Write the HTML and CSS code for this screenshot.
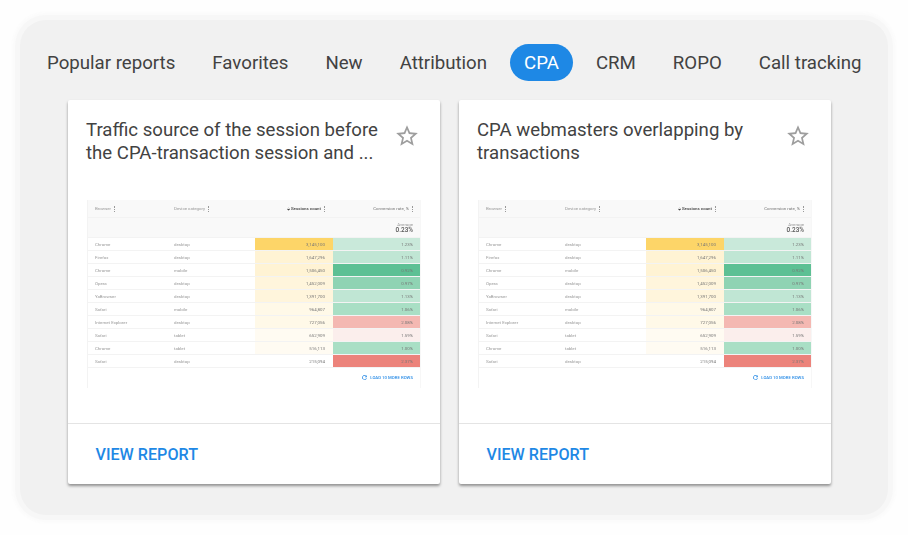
FILE: index.html
```html
<!DOCTYPE html>
<html lang="en">
<head>
<meta charset="utf-8">
<title>Reports</title>
<link rel="stylesheet" href="styles.css">
</head>
<body>
<main class="panel">
  <nav class="tabs">
    <a class="tab">Popular reports</a>
    <a class="tab">Favorites</a>
    <a class="tab">New</a>
    <a class="tab">Attribution</a>
    <a class="tab tab-active">CPA</a>
    <a class="tab">CRM</a>
    <a class="tab">ROPO</a>
    <a class="tab">Call tracking</a>
  </nav>
  <section class="cards">
    <article class="card">
      <header class="card-head">
        <h2 class="card-title">Traffic source of the session before the CPA-transaction session and ...</h2>
        <svg class="star" viewBox="0 0 24 24"><path d="M22 9.24l-7.19-.62L12 2 9.19 8.63 2 9.24l5.46 4.73L5.82 21 12 17.27 18.18 21l-1.63-7.03L22 9.24zM12 15.4l-3.76 2.27 1-4.28-3.32-2.88 4.38-.38L12 6.1l1.71 4.04 4.38.38-3.32 2.88 1 4.28L12 15.4z"/></svg>
      </header>
      <div class="preview">
        <div class="tbl">
          <div class="row row-head"><span class="c1">Browser<i class="dots"></i></span><span class="c2">Device category<i class="dots"></i></span><span class="c3 strong">⬙ Sessions count<i class="dots"></i></span><span class="c4">Conversion rate, %<i class="dots"></i></span></div>
          <div class="row row-avg"><span class="avg"><small>Average</small><b>0.23%</b></span></div>
          <div class="row"><span class="c1">Chrome</span><span class="c2">desktop</span><span class="c3 y1">3,145,100</span><span class="c4 g1">1.23%</span></div>
          <div class="row"><span class="c1">Firefox</span><span class="c2">desktop</span><span class="c3 y2">1,647,296</span><span class="c4 g2">1.11%</span></div>
          <div class="row"><span class="c1">Chrome</span><span class="c2">mobile</span><span class="c3 y2">1,506,450</span><span class="c4 g3">0.92%</span></div>
          <div class="row"><span class="c1">Opera</span><span class="c2">desktop</span><span class="c3 y3">1,452,009</span><span class="c4 g4">0.97%</span></div>
          <div class="row"><span class="c1">YaBrowser</span><span class="c2">desktop</span><span class="c3 y3">1,391,700</span><span class="c4 g2">1.13%</span></div>
          <div class="row"><span class="c1">Safari</span><span class="c2">mobile</span><span class="c3 y4">964,807</span><span class="c4 g5">1.06%</span></div>
          <div class="row"><span class="c1">Internet Explorer</span><span class="c2">desktop</span><span class="c3 y4">727,056</span><span class="c4 r1">2.08%</span></div>
          <div class="row"><span class="c1">Safari</span><span class="c2">tablet</span><span class="c3 y5">652,909</span><span class="c4 r2">1.59%</span></div>
          <div class="row"><span class="c1">Chrome</span><span class="c2">tablet</span><span class="c3 y5">516,113</span><span class="c4 g5">1.00%</span></div>
          <div class="row"><span class="c1">Safari</span><span class="c2">desktop</span><span class="c3">215,094</span><span class="c4 r3">2.37%</span></div>
          <div class="more"><svg class="reload" viewBox="0 0 24 24"><path d="M17.65 6.35A8 8 0 1 0 19.73 14h-2.08A6 6 0 1 1 12 6c1.66 0 3.14.69 4.22 1.78L13 11h7V4l-2.35 2.35z"/></svg>LOAD 10 MORE ROWS</div>
        </div>
      </div>
      <footer class="card-foot"><a class="view">VIEW REPORT</a></footer>
    </article>
    <article class="card">
      <header class="card-head">
        <h2 class="card-title">CPA webmasters overlapping by transactions</h2>
        <svg class="star" viewBox="0 0 24 24"><path d="M22 9.24l-7.19-.62L12 2 9.19 8.63 2 9.24l5.46 4.73L5.82 21 12 17.27 18.18 21l-1.63-7.03L22 9.24zM12 15.4l-3.76 2.27 1-4.28-3.32-2.88 4.38-.38L12 6.1l1.71 4.04 4.38.38-3.32 2.88 1 4.28L12 15.4z"/></svg>
      </header>
      <div class="preview">
        <div class="tbl">
          <div class="row row-head"><span class="c1">Browser<i class="dots"></i></span><span class="c2">Device category<i class="dots"></i></span><span class="c3 strong">⬙ Sessions count<i class="dots"></i></span><span class="c4">Conversion rate, %<i class="dots"></i></span></div>
          <div class="row row-avg"><span class="avg"><small>Average</small><b>0.23%</b></span></div>
          <div class="row"><span class="c1">Chrome</span><span class="c2">desktop</span><span class="c3 y1">3,145,100</span><span class="c4 g1">1.23%</span></div>
          <div class="row"><span class="c1">Firefox</span><span class="c2">desktop</span><span class="c3 y2">1,647,296</span><span class="c4 g2">1.11%</span></div>
          <div class="row"><span class="c1">Chrome</span><span class="c2">mobile</span><span class="c3 y2">1,506,450</span><span class="c4 g3">0.92%</span></div>
          <div class="row"><span class="c1">Opera</span><span class="c2">desktop</span><span class="c3 y3">1,452,009</span><span class="c4 g4">0.97%</span></div>
          <div class="row"><span class="c1">YaBrowser</span><span class="c2">desktop</span><span class="c3 y3">1,391,700</span><span class="c4 g2">1.13%</span></div>
          <div class="row"><span class="c1">Safari</span><span class="c2">mobile</span><span class="c3 y4">964,807</span><span class="c4 g5">1.06%</span></div>
          <div class="row"><span class="c1">Internet Explorer</span><span class="c2">desktop</span><span class="c3 y4">727,056</span><span class="c4 r1">2.08%</span></div>
          <div class="row"><span class="c1">Safari</span><span class="c2">tablet</span><span class="c3 y5">652,909</span><span class="c4 r2">1.59%</span></div>
          <div class="row"><span class="c1">Chrome</span><span class="c2">tablet</span><span class="c3 y5">516,113</span><span class="c4 g5">1.00%</span></div>
          <div class="row"><span class="c1">Safari</span><span class="c2">desktop</span><span class="c3">215,094</span><span class="c4 r3">2.37%</span></div>
          <div class="more"><svg class="reload" viewBox="0 0 24 24"><path d="M17.65 6.35A8 8 0 1 0 19.73 14h-2.08A6 6 0 1 1 12 6c1.66 0 3.14.69 4.22 1.78L13 11h7V4l-2.35 2.35z"/></svg>LOAD 10 MORE ROWS</div>
        </div>
      </div>
      <footer class="card-foot"><a class="view">VIEW REPORT</a></footer>
    </article>
  </section>
</main>
</body>
</html>
```
FILE: styles.css
```css
* { box-sizing: border-box; }
html, body { height: 100%; }
body {
  margin: 0;
  padding: 20px;
  background: #fefefe;
  font-family: Roboto, "Liberation Sans", sans-serif;
  overflow: hidden;
}
.panel {
  width: 868px;
  height: 495px;
  padding: 24px 0 0 13px;
  background: #f1f1f1;
  border-radius: 26px;
  box-shadow: 0 0 0 5px #f7f7f7, 0 0 3px 8px #fbfbfb;
}
.tabs { display: flex; gap: 9px; height: 37px; align-items: center; }
.tab {
  height: 37px;
  line-height: 38px;
  padding: 0 14px;
  font-size: 18.67px;
  color: #424242;
  white-space: nowrap;
  border-radius: 19px;
}
.tab-active { background: #1e88e5; color: #fff; }
.cards { display: flex; gap: 19px; margin: 19px 0 0 35px; }
.card {
  width: 372px;
  height: 384px;
  background: #fff;
  border-radius: 2px;
  box-shadow: 0 2px 3px rgba(0,0,0,.4);
  display: flex;
  flex-direction: column;
}
.card-head { display: flex; justify-content: space-between; flex: none; height: 100px; padding: 19px 20px 0 18px; }
.card-title {
  margin: 0;
  width: 296px;
  font-size: 18.6px;
  font-weight: 400;
  line-height: 23px;
  color: #424242;
}
.star { width: 26px; height: 26px; margin-top: 4px; fill: #9e9e9e; flex: none; }
.preview { flex: none; height: 223px; padding-left: 19px; }
.tbl {
  width: 334px;
  height: 188px;
  font-size: 4.4px;
  color: #999;
  border-left: 1px solid #f3f3f3;
  border-right: 1px solid #f7f7f7;
  filter: blur(.3px);
}
.row { display: flex; height: 13px; line-height: 13px; border-bottom: 1px solid #f3f3f3; }
.row-head { height: 18px; line-height: 17px; background: #f9f9f9; }
.row-avg { height: 20px; background: #f9f9f9; justify-content: flex-end; padding-right: 7px; }
.c1 { width: 86px; padding-left: 7px; }
.c2 { width: 81px; }
.c3 { width: 78px; padding-right: 8px; text-align: right; color: #777; }
.c4 { flex: 1; padding-right: 7px; text-align: right; color: #777; }
.strong { color: #444; font-weight: 500; }
.dots {
  display: inline-block;
  width: 1px;
  height: 6px;
  margin-left: 3px;
  vertical-align: middle;
  border-left: 1px dotted #999;
}
.avg { display: flex; flex-direction: column; align-items: flex-end; line-height: 5px; padding-top: 4px; }
.avg small { font-size: 4.4px; }
.avg b { font-size: 6.4px; font-weight: 500; line-height: 7px; color: #555; }
.y1 { background: #fdd568; }
.y2 { background: #fff3d4; }
.y3 { background: #fff5dc; }
.y4 { background: #fff9e8; }
.y5 { background: #fffbf2; }
.g1 { background: #c9e9da; }
.g2 { background: #c0e6d4; }
.g3 { background: #5dc094; }
.g4 { background: #8fd3b3; }
.g5 { background: #a9dfc5; }
.r1 { background: #f4b8b2; }
.r2 { background: #fbeeec; }
.r3 { background: #ec837b; }
.more {
  display: flex;
  justify-content: flex-end;
  align-items: center;
  gap: 2px;
  height: 19px;
  padding-right: 7px;
  color: #2a8ce6;
  font-weight: 500;
  font-size: 4.3px;
}
.reload { width: 7px; height: 7px; fill: #2a8ce6; }
.card-foot { flex: none; height: 61px; border-top: 1px solid #e4e4e4; padding: 1px 0 0 27.5px; line-height: 59px; }
.view { font-size: 16.15px; font-weight: 500; color: #1e88e5; }
```
